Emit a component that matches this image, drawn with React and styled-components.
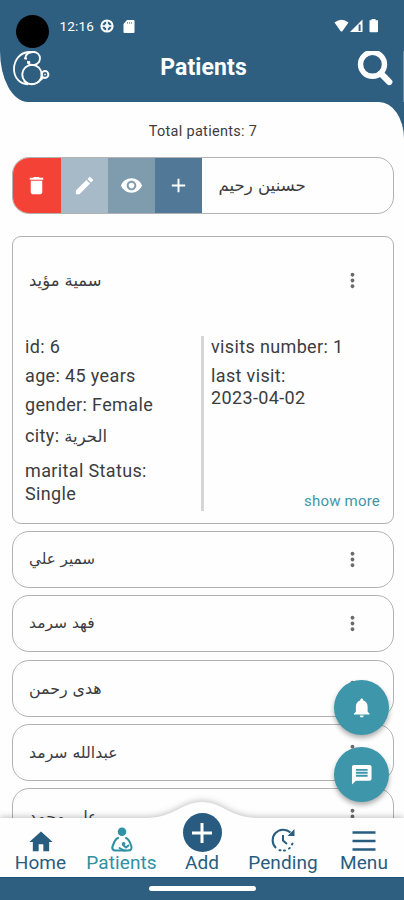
import React from "react";
import styled, { createGlobalStyle } from "styled-components";
import {
    MdDelete,
    MdEdit,
    MdRemoveRedEye,
    MdAdd,
    MdMoreVert,
    MdNotifications,
    MdMessage,
    MdHome,
} from "react-icons/md";

const GlobalStyle = createGlobalStyle`
    * {
        box-sizing: border-box;
    }

    body {
        margin: 0;
        font-family: Roboto, "DejaVu Sans", sans-serif;
    }

    button {
        border: 0;
        padding: 0;
        background: none;
        font: inherit;
        color: inherit;
    }
`;

const Screen = styled.div`
    position: relative;
    width: 404px;
    height: 900px;
    display: flex;
    flex-direction: column;
    overflow: hidden;
    background: #fefefe;
    color: #3c3c3e;
`;

const StatusBar = styled.div`
    height: 51px;
    flex-shrink: 0;
    display: flex;
    align-items: flex-start;
    padding: 15px 25px 0 16px;
    background: #2f5f80;
    color: white;
`;

const Camera = styled.div`
    width: 33px;
    height: 33px;
    border-radius: 50%;
    background: black;
    position: relative;
    z-index: 1;
`;

const Clock = styled.span`
    margin-left: 10.5px;
    width: 40.5px;
    font-size: 13.5px;
    line-height: 23px;
    letter-spacing: 0.2px;
    white-space: nowrap;
`;

const StatusIcons = styled.div`
    display: flex;
    align-items: center;
    height: 22px;
    gap: ${({ $gap }) => $gap}px;
    margin-left: ${({ $push }) => ($push ? "auto" : "0")};
`;

const Header = styled.header`
    height: 51px;
    flex-shrink: 0;
    display: flex;
    justify-content: space-between;
    align-items: flex-start;
    padding: 0 10px 0 13px;
    background: #2f5f80;
    border-bottom-left-radius: 28px 51px;
    border-right: 1px solid #6c8ea6;
    color: white;
`;

const Title = styled.h1`
    margin: 0;
    font-size: 23px;
    line-height: 33px;
    font-weight: 700;
    letter-spacing: 0.1px;
`;

/* Blue backdrop that shows behind the rounded corner of the content */
const Backdrop = styled.div`
    flex: 1;
    min-height: 0;
    background: linear-gradient(#2f5f80 50px, #fefefe 50px);
`;

const Content = styled.main`
    height: 100%;
    padding: 0 10px 0 12px;
    background: #fefefe;
    border-top-right-radius: 25px 37px;
`;

const Total = styled.p`
    margin: 0;
    padding: 20px 0 0 0;
    height: 55px;
    font-size: 14.5px;
    line-height: 19px;
    letter-spacing: 0.3px;
    text-align: center;
`;

const PatientList = styled.div`
    display: flex;
    flex-direction: column;
    gap: 7.2px;
`;

const PatientRow = styled.div`
    height: 57px;
    flex-shrink: 0;
    display: flex;
    align-items: center;
    border: 1px solid #b2b2b2;
    border-radius: 17px;
    overflow: hidden;
    margin-bottom: ${({ $swiped }) => ($swiped ? "14.8px" : "0")};
`;

const SwipeAction = styled.button`
    width: ${({ $width }) => $width || 47.3}px;
    height: 100%;
    display: flex;
    align-items: center;
    justify-content: center;
    background: ${({ $color }) => $color};
    color: white;
    font-size: 23px;
`;

const Name = styled.span`
    flex: 1;
    padding-left: 16px;
    font-family: "DejaVu Sans", sans-serif;
    font-size: ${({ $size }) => $size || 16}px;
    line-height: 25px;
    white-space: nowrap;
`;

const MoreButton = styled.button`
    display: flex;
    margin-right: 29px;
    font-size: 23px;
    color: #6b6b6b;
`;

const DetailCard = styled.section`
    height: 288px;
    flex-shrink: 0;
    border: 1px solid #b2b2b2;
    border-radius: 9px;
`;

const DetailHeader = styled.div`
    height: 99px;
    display: flex;
    align-items: center;
    padding-bottom: 11px;
`;

const DetailBody = styled.div`
    display: flex;
    height: 175px;
    font-size: 18px;
    line-height: 22.6px;
    letter-spacing: 0.36px;
`;

const Column = styled.div`
    width: ${({ $width }) => $width}px;
    display: flex;
    flex-direction: column;
    padding-left: ${({ $inset }) => $inset}px;
    border-left: ${({ $divided }) => ($divided ? "3px solid #d6d6d6" : "0")};
`;

const Field = styled.div`
    white-space: pre-line;
    padding-bottom: ${({ $space }) => ($space === undefined ? 6.2 : $space)}px;
`;

const CityName = styled.span`
    font-family: "DejaVu Sans", sans-serif;
    font-size: 16.5px;
    line-height: 1;
    letter-spacing: 0;
`;

const ShowMore = styled.a`
    margin-top: auto;
    align-self: flex-end;
    margin-right: 13px;
    margin-bottom: -2px;
    font-size: 15px;
    letter-spacing: 0.2px;
    color: #3f96ab;
`;

const FloatingActions = styled.div`
    position: absolute;
    right: 15px;
    bottom: 98px;
    display: flex;
    flex-direction: column;
    gap: 12px;
`;

const FloatingButton = styled.button`
    width: 55px;
    height: 55px;
    border-radius: 50%;
    display: flex;
    align-items: center;
    justify-content: center;
    font-size: 23.5px;
    color: white;
    background: #3e96aa;
    box-shadow: 0 3px 5px rgba(0, 0, 0, 0.32);
`;

const BottomBar = styled.nav`
    position: absolute;
    left: 0;
    bottom: 0;
    width: 100%;
`;

const BarShape = styled.svg`
    position: absolute;
    left: 0;
    top: -20px;
    display: block;
    filter: drop-shadow(0 -1px 3px rgba(0, 0, 0, 0.25));
`;

const Tabs = styled.div`
    position: relative;
    height: 59px;
    display: grid;
    grid-template-columns: 81px 81px 80px 82px 80px;
    grid-template-rows: 59px;
`;

const Tab = styled.button`
    display: flex;
    flex-direction: column;
    align-items: center;
    justify-content: flex-end;
    min-height: 0;
    padding-bottom: 4px;
    color: ${({ $active }) => ($active ? "#2f91a2" : "#285d80")};
    font-size: 19px;
    line-height: 20px;
    letter-spacing: 0.1px;
    white-space: nowrap;
    gap: ${({ $gap }) => $gap || 0}px;
`;

const HomeIcon = styled(MdHome)`
    flex-shrink: 0;
    font-size: 28px;
    margin-bottom: -3px;
`;

const AddCircle = styled.span`
    width: 39px;
    height: 39px;
    flex-shrink: 0;
    display: flex;
    align-items: center;
    justify-content: center;
    border-radius: 50%;
    background: #285b7f;
`;

const GestureBar = styled.div`
    position: relative;
    height: 23px;
    display: flex;
    justify-content: center;
    padding-top: 8px;
    background: #2f5f80;
    border-top: 1px solid #1c5279;
`;

const GestureHandle = styled.div`
    width: 107px;
    height: 5px;
    border-radius: 3px;
    background: white;
`;

const patients = [
    { name: "سمير علي", size: 15.2 },
    { name: "فهد سرمد", size: 15.5 },
    { name: "هدى رحمن", size: 15.8 },
    { name: "عبدالله سرمد", size: 15.7 },
    { name: "علي محمد", size: 15.7 },
];

const LogoIcon = () => (
    <svg width="37" height="35" viewBox="0 0 37 35" fill="none" stroke="white">
        <path d="M22 1H16C7 1.5 1 9 1 18C1 27 7 33 15 33.4" strokeWidth="1.8" />
        <path d="M12 8C12.5 3 16 1 20 1C24.5 1 27 4 27 7.5C27 11.5 23 14.5 19 14C16 13.5 14.5 12 15 10" strokeWidth="1.8" />
        <path d="M11.5 7.5H14M14.5 12.5L17 10.5" strokeWidth="2" />
        <circle cx="19" cy="23.5" r="9.7" strokeWidth="1.8" />
        <path d="M11 30C15 34.5 23 34.5 27.5 29L30 27" strokeWidth="1.8" />
        <circle cx="32" cy="23.5" r="3.4" strokeWidth="2" />
        <circle cx="32" cy="23.5" r="0.6" strokeWidth="1" />
    </svg>
);

const SearchIcon = () => (
    <svg width="36" height="35" viewBox="0 0 36 35" fill="none" stroke="white">
        <circle cx="15.5" cy="13.3" r="12" strokeWidth="5.4" />
        <path d="M24 22.5L32.3 31" strokeWidth="6.2" strokeLinecap="round" />
    </svg>
);

const GlobeIcon = () => (
    <svg width="14" height="14" viewBox="0 0 14 14" fill="none" stroke="white">
        <circle cx="7" cy="7" r="5.6" strokeWidth="2" />
        <path d="M2 7H12M7 2V12" strokeWidth="1.6" />
        <circle cx="7" cy="7" r="2" strokeWidth="1" />
    </svg>
);

const CardIcon = () => (
    <svg width="12" height="13" viewBox="0 0 12 13">
        <path d="M4 0H10.5Q11.5 0 11.5 1V12Q11.5 13 10.5 13H1.5Q0.5 13 0.5 12V4Z" fill="white" />
        <path d="M4.5 2V4M6.5 2V4M8.5 2V4" stroke="#7795aa" strokeWidth="0.8" />
    </svg>
);

const SignalIcons = () => (
    <svg width="45" height="14" viewBox="0 0 45 14" fill="white">
        <path d="M0.5 3.5Q7.5 -2 14.5 3.5L8.5 12Q7.5 13.2 6.5 12Z" />
        <path d="M28.5 0.5V13H16Z" />
        <path d="M25.6 5.5V12" stroke="#2f5f80" strokeWidth="2" />
        <path d="M37.5 0H41.5V1.2H44V12.3Q44 13.2 43 13.2H36.5Q35.5 13.2 35.5 12.3V1.2H37.5Z" />
    </svg>
);

const PatientsIcon = () => (
    <svg width="22" height="25" viewBox="0 0 22 25" fill="none" stroke="currentColor">
        <circle cx="11" cy="4.8" r="4.3" fill="currentColor" stroke="none" />
        <path d="M7 11C4 12 3 15 1.7 19C0.7 22 2 23.5 4.5 23.5H14" strokeWidth="2.2" strokeLinecap="round" />
        <path d="M15 11C18 12 19 15 20.3 19C21 22 20 23.5 17 23.5H13L8.5 21" strokeWidth="2" strokeLinecap="round" />
        <path d="M11.5 17.5L15 20.5L18 18" strokeWidth="2" />
        <circle cx="12.6" cy="16.8" r="1.8" fill="currentColor" stroke="none" />
    </svg>
);

const PendingIcon = () => (
    <svg width="24" height="25" viewBox="0 0 24 25" fill="none" stroke="currentColor">
        <path d="M5 21A10.3 10.3 0 0 1 19.5 5.5" strokeWidth="2" />
        <path d="M23.5 2V9H16.5Z" fill="currentColor" stroke="none" />
        <path d="M12 8V13.5L16 17" strokeWidth="2" />
        <path d="M8.5 23.2H9.5M13 23.5H14M18 21.5L18.8 21M21 17.5L21.5 16.6" strokeWidth="2" strokeLinecap="round" />
    </svg>
);

const MenuIcon = () => (
    <svg width="24" height="23" viewBox="0 0 24 23" stroke="currentColor" strokeWidth="2.6">
        <path d="M0.5 2.5H23.5M0.5 11H23.5M0.5 19.5H23.5" />
    </svg>
);

const AddIcon = () => (
    <svg width="22" height="22" viewBox="0 0 22 22" stroke="white" strokeWidth="3">
        <path d="M11 1V21M1 11H21" />
    </svg>
);

const App = () => {
    return (
        <Screen>
            <GlobalStyle />
            <StatusBar>
                <Camera />
                <Clock>12:16</Clock>
                <StatusIcons $gap={9}>
                    <GlobeIcon />
                    <CardIcon />
                </StatusIcons>
                <StatusIcons $push>
                    <SignalIcons />
                </StatusIcons>
            </StatusBar>
            <Header>
                <LogoIcon />
                <Title>Patients</Title>
                <SearchIcon />
            </Header>
            <Backdrop>
                <Content>
                    <Total>Total patients: 7</Total>
                    <PatientList>
                        <PatientRow $swiped>
                            <SwipeAction $color="#f44336" $width={47.5}>
                                <MdDelete />
                            </SwipeAction>
                            <SwipeAction $color="#a7bac8">
                                <MdEdit />
                            </SwipeAction>
                            <SwipeAction $color="#7e9cae">
                                <MdRemoveRedEye />
                            </SwipeAction>
                            <SwipeAction $color="#527897">
                                <MdAdd />
                            </SwipeAction>
                            <Name $size={16.6}>حسنين رحيم</Name>
                        </PatientRow>
                        <DetailCard>
                            <DetailHeader>
                                <Name $size={16.4}>سمية مؤيد</Name>
                                <MoreButton>
                                    <MdMoreVert />
                                </MoreButton>
                            </DetailHeader>
                            <DetailBody>
                                <Column $width={188} $inset={12}>
                                    <Field>id: 6</Field>
                                    <Field>age: 45 years</Field>
                                    <Field $space={9}>gender: Female</Field>
                                    <Field $space={12.6}>
                                        city: <CityName>الحرية</CityName>
                                    </Field>
                                    <Field>{"marital Status:\nSingle"}</Field>
                                </Column>
                                <Column $width={192} $inset={7} $divided>
                                    <Field>visits number: 1</Field>
                                    <Field>{"last visit:\n2023-04-02"}</Field>
                                    <ShowMore>show more</ShowMore>
                                </Column>
                            </DetailBody>
                        </DetailCard>
                        {patients.map((patient) => (
                            <PatientRow key={patient.name}>
                                <Name $size={patient.size}>{patient.name}</Name>
                                <MoreButton>
                                    <MdMoreVert />
                                </MoreButton>
                            </PatientRow>
                        ))}
                    </PatientList>
                </Content>
            </Backdrop>
            <FloatingActions>
                <FloatingButton>
                    <MdNotifications />
                </FloatingButton>
                <FloatingButton>
                    <MdMessage />
                </FloatingButton>
            </FloatingActions>
            <BottomBar>
                <BarShape width="404" height="102" viewBox="0 0 404 102">
                    <path d="M0 20H145C175 20 181 4 202 4C223 4 229 20 259 20H404V102H0Z" fill="#fefefe" />
                </BarShape>
                <Tabs>
                    <Tab>
                        <HomeIcon />
                        Home
                    </Tab>
                    <Tab $active $gap={1}>
                        <PatientsIcon />
                        Patients
                    </Tab>
                    <Tab $gap={1}>
                        <AddCircle>
                            <AddIcon />
                        </AddCircle>
                        Add
                    </Tab>
                    <Tab $gap={1}>
                        <PendingIcon />
                        Pending
                    </Tab>
                    <Tab>
                        <MenuIcon />
                        Menu
                    </Tab>
                </Tabs>
                <GestureBar>
                    <GestureHandle />
                </GestureBar>
            </BottomBar>
        </Screen>
    );
};

export default App;
